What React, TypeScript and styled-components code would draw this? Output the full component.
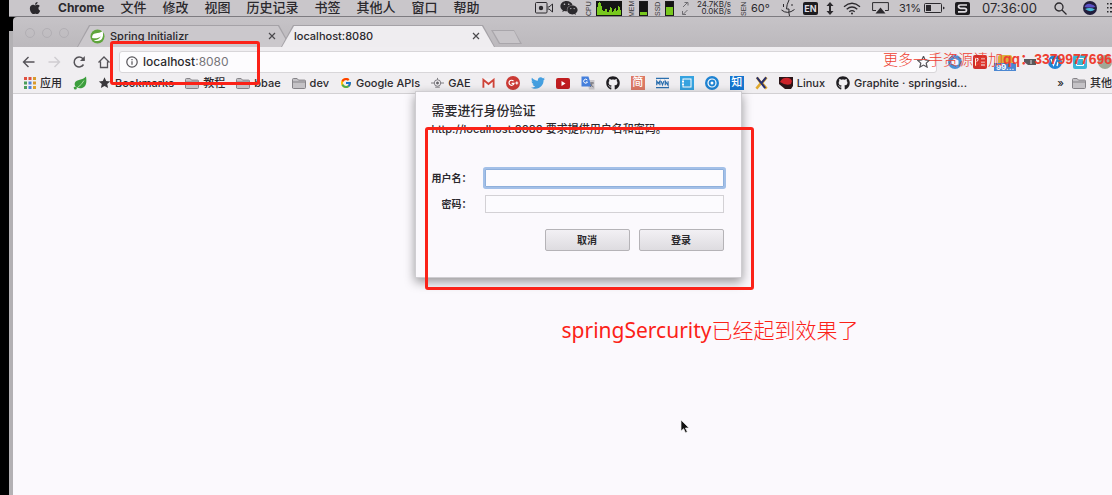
import React from 'react';
import styled, { createGlobalStyle, css } from 'styled-components';
import { FaApple, FaWeixin, FaTwitter, FaGithub } from 'react-icons/fa';
import { FcGoogle } from 'react-icons/fc';

const ui = '"Inter", "Noto Sans CJK SC", sans-serif';
const ink = '#2b292d';
const red = '#fb2218';

const Global = createGlobalStyle`
  * { box-sizing: border-box; }
  html, body, #root { margin: 0; min-height: 100vh; }
  body { background: #000; font-family: ${ui}; color: ${ink}; overflow: hidden; }
  button { font: inherit; color: inherit; background: none; border: 0; padding: 0; cursor: default; }
  a { color: inherit; text-decoration: none; }
  svg { display: block; flex: none; }
`;

const Desktop = styled.div`
  position: relative;
  min-height: 100vh;
  padding-left: 9px;
  display: flex;
  flex-direction: column;
  overflow: hidden;
`;

const MenuBar = styled.header`
  display: flex;
  align-items: center;
  height: 17px;
  padding-left: 19px;
  background: #c9c6ca;
  border-bottom: 1px solid #7d7b80;
  overflow: hidden;
`;

const Menus = styled.nav`
  display: flex;
  align-items: center;
  gap: 16px;
  padding-bottom: 1px;
  font-size: 13px;
  line-height: 15px;
  font-weight: 500;
`;

const MenuButton = styled.button<{ $app?: boolean }>`
  white-space: nowrap;
  ${(p) => p.$app && css`font-size: 12px; font-weight: 700;`}
`;

const Status = styled.div`
  display: flex;
  align-items: center;
  margin-left: auto;
  flex: none;
  font-size: 11px;
  line-height: 16px;
  white-space: nowrap;
`;

const StatusItem = styled.div<{ $w: number; $gap?: number; $large?: boolean }>`
  display: flex;
  align-items: center;
  gap: 3px;
  flex: none;
  width: ${(p) => p.$w}px;
  margin-left: ${(p) => p.$gap ?? 8}px;
  ${(p) => p.$large && css`font-size: 13px;`}
`;

const VerticalLabel = styled.span`
  display: flex;
  align-items: center;
  justify-content: center;
  writing-mode: vertical-rl;
  rotate: 180deg;
  font: 400 7px/8px "Liberation Sans", sans-serif;
  width: 8px;
  height: 15px;
  color: #3a383c;
`;

const Meter = styled.span<{ $level: number }>`
  width: 9px;
  height: 15px;
  border: 1px solid #1b1b1b;
  background: linear-gradient(to top, #78c81e ${(p) => p.$level}%, #141414 ${(p) => p.$level}%);
`;

const Speeds = styled.span`
  display: flex;
  flex-direction: column;
  font-size: 8px;
  line-height: 7px;
  text-align: right;
`;

const Badge = styled.span`
  width: 15px;
  height: 13px;
  border-radius: 2px;
  background: #1d1c1f;
  color: #dedbe0;
  font-size: 9px;
  line-height: 13px;
  font-weight: 700;
  text-align: center;
`;

const Browser = styled.main`
  flex: 1;
  display: flex;
  flex-direction: column;
  border-left: 4px solid;
  border-image: linear-gradient(#000 14px, #b3b1b4 14px) 0 0 0 4;
`;

const TabStrip = styled.div`
  display: flex;
  align-items: flex-end;
  height: 30px;
  padding-left: 12px;
  background: linear-gradient(#c6c3c7, #bcb9bd);
  border-top-left-radius: 4px;
`;

const Lights = styled.div`
  display: flex;
  gap: 7px;
  width: 52px;
  padding-bottom: 9px;
`;

const Light = styled.button`
  width: 10px;
  height: 10px;
  border: 1px solid #b2afb4;
  border-radius: 50%;
`;

const slant = 'polygon(12px 0, calc(100% - 12px) 0, 100% 100%, 0 100%)';

const Tab = styled.div<{ $active?: boolean }>`
  position: relative;
  display: flex;
  align-items: center;
  gap: 5px;
  width: 214px;
  height: 22px;
  padding: 0 15px 0 13px;
  background: #a5a2a7;
  clip-path: ${slant};
  font-size: 11px;
  font-weight: 500;
  z-index: ${(p) => (p.$active ? 2 : 1)};
  margin-left: ${(p) => (p.$active ? '-10px' : '0')};
  &::before {
    content: '';
    position: absolute;
    inset: 1px 1px 0;
    background: ${(p) => (p.$active ? '#efedf0' : '#cbc8cc')};
    clip-path: ${slant};
  }
  > * { position: relative; }
`;

const TabClose = styled.button`
  margin-left: auto;
`;

const NewTab = styled.button`
  width: 31px;
  height: 14px;
  margin: 0 0 3px -4px;
  background: #a9a6ab;
  clip-path: polygon(0 0, 23px 0, 100% 100%, 8px 100%);
  &::before {
    content: '';
    display: block;
    height: 12px;
    margin: 0 2px;
    background: #c8c5c9;
    clip-path: polygon(0 0, 21px 0, 100% 100%, 7px 100%);
  }
`;

const Toolbar = styled.div`
  position: relative;
  display: flex;
  align-items: center;
  gap: 11px;
  height: 26px;
  padding: 3px 0 0 9px;
  background: #f0eef1;
`;

const NavButtons = styled.div`
  display: flex;
  gap: 11px;
`;

const Omnibox = styled.form`
  flex: 1;
  display: flex;
  align-items: center;
  gap: 5px;
  height: 22px;
  margin-left: -3px;
  padding: 0 6px;
  background: #fdfcfe;
  border: 1px solid #d8d6d9;
  border-radius: 3px;
`;

const Address = styled.div`
  position: relative;
  flex: 1;
  display: flex;
  font-size: 12px;
  line-height: 18px;
  font-weight: 500;
`;

const AddressInput = styled.input`
  position: absolute;
  inset: 0;
  width: 100%;
  border: 0;
  background: transparent;
  outline: 0;
  font: inherit;
`;

const Port = styled.span`
  color: #77757a;
  font-weight: 400;
`;

const Extensions = styled.div`
  display: flex;
  gap: 11px;
`;

const Extension = styled.button<{ $color: string; $round?: boolean }>`
  position: relative;
  width: 14px;
  height: 14px;
  color: #fff;
  background: ${(p) => p.$color};
  border-radius: ${(p) => (p.$round ? '50%' : '2px')};
`;

const Count = styled.span`
  position: absolute;
  left: -4px;
  top: 8px;
  width: 22px;
  height: 8px;
  background: #4b87d2;
  font-size: 8px;
  line-height: 8px;
  font-weight: 700;
`;

const Watermark = styled.div`
  position: absolute;
  right: 0;
  top: 1px;
  z-index: 3;
  display: flex;
  white-space: nowrap;
  font: 300 15px/22px "Noto Sans CJK SC", sans-serif;
  color: #ee3f31;
  pointer-events: none;
`;

const WatermarkId = styled.span`
  font: 700 14px/22px "Liberation Sans", "Noto Sans CJK SC", sans-serif;
`;

const Bookmarks = styled.nav`
  display: flex;
  align-items: center;
  gap: 11px;
  height: 21px;
  padding-left: 11px;
  background: #f0eef1;
  border-bottom: 1px solid #d2d0d3;
  font-size: 11px;
  line-height: 16px;
  font-weight: 500;
  overflow: hidden;
`;

const Bookmark = styled.a`
  display: flex;
  align-items: center;
  gap: 4px;
  flex: none;
  white-space: nowrap;
`;

const Other = styled.div`
  display: flex;
  align-items: center;
  gap: 8px;
  flex: none;
  margin-left: auto;
`;

const Tile = styled.span<{ $color: string }>`
  width: 14px;
  height: 14px;
  background: ${(p) => p.$color};
  color: #fff;
  font-size: 11px;
  line-height: 13px;
  text-align: center;
`;

const Page = styled.section`
  flex: 1;
  display: flex;
  flex-direction: column;
  align-items: center;
  padding-left: 31px;
  background: #fbf9fd;
`;

const Dialog = styled.form`
  position: relative;
  z-index: 2;
  width: 327px;
  margin-top: -3px;
  padding: 8px 17px 26px 16px;
  background: #fbf9fd;
  border: 1px solid #cfcdd1;
  box-shadow: 0 4px 10px rgba(0, 0, 0, 0.4);
`;

const DialogTitle = styled.h1`
  margin: 0;
  font-size: 13px;
  line-height: 20px;
  font-weight: 500;
`;

const DialogText = styled.p`
  margin: 0 0 27px;
  font-size: 11px;
  line-height: 18px;
  font-weight: 500;
  white-space: nowrap;
`;

const Field = styled.div`
  display: flex;
  align-items: center;
  justify-content: space-between;
  height: 26px;
`;

const Label = styled.label`
  width: 40px;
  text-align: right;
  font-size: 10px;
  line-height: 16px;
  font-weight: 700;
  white-space: nowrap;
`;

const Input = styled.input<{ $focused?: boolean }>`
  width: 239px;
  height: 18px;
  border: 1px solid #d3d1d5;
  background: #fcfbfe;
  outline: 0;
  ${(p) => p.$focused && css`
    border-color: #8fb0dc;
    border-radius: 1px;
    box-shadow: 0 0 0 2px #a3c0e8;
  `}
`;

const Actions = styled.div`
  display: flex;
  justify-content: flex-end;
  gap: 9px;
  margin-top: 12px;
`;

const ActionButton = styled.button`
  && {
    width: 85px;
    height: 22px;
    border: 1px solid #b5b3b7;
    border-radius: 2px;
    background: linear-gradient(#f2f0f4, #dedce0);
    font-size: 10px;
    line-height: 20px;
    font-weight: 700;
  }
`;

const Highlight = styled.div<{ $x: number; $y: number; $w: number; $h: number }>`
  position: absolute;
  z-index: 5;
  left: ${(p) => p.$x}px;
  top: ${(p) => p.$y}px;
  width: ${(p) => p.$w}px;
  height: ${(p) => p.$h}px;
  border: 3px solid ${red};
  border-radius: 3px;
  pointer-events: none;
`;

const Note = styled.p`
  margin: 36px 0 0 264px;
  font: 400 21px/30px "Noto Sans", "Noto Sans CJK SC", sans-serif;
  color: ${red};
  white-space: nowrap;
`;

const NoteCjk = styled.span`
  font-family: "Noto Sans CJK SC", sans-serif;
  font-weight: 300;
`;

const Pointer = styled.div`
  position: absolute;
  left: 680px;
  top: 419px;
`;

const Folder = () => (
  <svg width="14" height="11" viewBox="0 0 14 11">
    <path d="M.5 10V1.5Q.5.5 1.5.5h3.6l1.4 1.6h6q1 0 1 1V9.500q0 1-1 1h-11q-1 0-1-1z" fill="#c4c2c6" stroke="#858388" />
    <path d="M1 4h12" stroke="#858388" />
  </svg>
);

const Close = () => (
  <svg width="8" height="8" viewBox="0 0 8 8" stroke="#4b494d" strokeWidth="1.200">
    <path d="M1 1l6 6M7 1L1 7" />
  </svg>
);

const SpringLeaf = () => (
  <svg width="15" height="15" viewBox="0 0 15 15">
    <circle cx="7.5" cy="7.5" r="7" fill="#5fa53c" />
    <path d="M2.200 9C1.800 5.800 4 4.200 7.500 4c2.500-.1 4-.8 5-2.200 1 3.500.8 7.200-1.800 9.200-2.300 1.600-5.200 1-7 .4 3.300-.2 5.800-1.400 7.300-4.200C8.800 9 6 9.600 2.200 9z" fill="#fff" />
  </svg>
);

const GreenLeaf = () => (
  <svg width="14" height="14" viewBox="0 0 14 14">
    <path d="M13 .5C13.800 5 13.500 9 11 11c-2 1.600-5 1.500-7 .6C2 10.500 1 8.500 2 6.500 3.500 3.200 9.500 4.500 13 .5z" fill="#3c9e3d" />
    <path d="M.5 11.500q2 1.500 4 0Q8.500 9 11 4.500" fill="none" stroke="#a7dc9f" />
    <circle cx="2.300" cy="12" r="1.500" fill="#3c9e3d" />
  </svg>
);

const StarShape = ({ filled }: { filled?: boolean }) => (
  <svg width="13" height="12" viewBox="0 0 12 12">
    <path d="M6 .3l1.700 3.700 4 .4-3 2.700.9 4L6 9.100l-3.600 2 .9-4-3-2.700 4-.4z" fill={filled ? '#3a383c' : 'none'} stroke={filled ? 'none' : '#555358'} strokeWidth="1.200" />
  </svg>
);

const appColors = ['#e0503f', '#e0503f', '#d99a2c', '#4a9d5a', '#4d80d8', '#d99a2c', '#4a9d5a', '#4d80d8', '#e0a42c'];
const Apps = () => (
  <svg width="12" height="12" viewBox="0 0 12 12">
    {appColors.map((c, i) => (
      <rect key={i} x={(i % 3) * 4.5} y={Math.floor(i / 3) * 4.5} width="3" height="3" fill={c} />
    ))}
  </svg>
);

const graph = [8, 12, 13, 12, 9, 5, 4, 4, 6, 6, 3, 3, 5, 8, 7, 3, 4, 6, 7, 4, 5, 9, 8, 5];

export default function App() {
  return (
    <Desktop>
      <Global />
      <MenuBar>
        <Menus aria-label="菜单">
          <FaApple size={14} />
          <MenuButton $app>Chrome</MenuButton>
          {['文件', '修改', '视图', '历史记录', '书签', '其他人', '窗口', '帮助'].map((m) => (
            <MenuButton key={m}>{m}</MenuButton>
          ))}
        </Menus>
        <Status>
          <StatusItem $w={18}>
            <svg width="18" height="12" viewBox="0 0 18 12" fill="none" stroke={ink}>
              <rect x=".5" y=".5" width="11.500" height="10.500" rx="1" />
              <circle cx="6" cy="6" r="2.200" fill={ink} stroke="none" />
              <path d="M12.500 5l1.500 0 3.500-3v8L14 7h-1.500" />
            </svg>
          </StatusItem>
          <StatusItem $w={18} $gap={7}><FaWeixin size={18} color={ink} /></StatusItem>
          <StatusItem $w={37} $gap={7}>
            <VerticalLabel>CPU</VerticalLabel>
            <svg width="26" height="15" viewBox="0 0 26 15">
              <rect width="26" height="15" fill="#141414" />
              {graph.map((h, i) => (
                <rect key={i} x={i + 1} y={14 - h} width="1" height={h} fill="#78c81e" />
              ))}
            </svg>
          </StatusItem>
          <StatusItem $w={20} $gap={6}><VerticalLabel>MEM</VerticalLabel><Meter $level={22} /></StatusItem>
          <StatusItem $w={20} $gap={6}><VerticalLabel>SSD</VerticalLabel><Meter $level={60} /></StatusItem>
          <StatusItem $w={7}>
            <svg width="7" height="13" viewBox="0 0 7 13" fill="none" stroke="#6e6c71">
              <path d="M1 5l4.500-4.500M2.500.5h3.500v3M5.500 8L1 12.500M.5 9v3.500H4" />
            </svg>
          </StatusItem>
          <StatusItem $w={40}><Speeds><span>24.7KB/s</span><span>0.0KB/s</span></Speeds></StatusItem>
          <StatusItem $w={33} $gap={3}><VerticalLabel>SEN</VerticalLabel>60°</StatusItem>
          <StatusItem $w={14}>
            <svg width="14" height="16" viewBox="0 0 14 16" fill="none" stroke={ink}>
              <path d="M2.500 4v3M11 4v2M8 0Q5.500 5 5.500 9h2.500Q7.500 13 8.500 16M.5 10q6 5 13-.5" />
            </svg>
          </StatusItem>
          <StatusItem $w={15}><Badge>EN</Badge></StatusItem>
          <StatusItem $w={8}>
            <svg width="8" height="13" viewBox="0 0 8 13">
              <path d="M4 0l3.500 4h-2.500v5h2.500L4 13 .5 9H3V4H.5z" fill={ink} />
            </svg>
          </StatusItem>
          <StatusItem $w={18} $gap={9}>
            <svg width="18" height="13" viewBox="0 0 18 13" fill="none" stroke={ink} strokeWidth="1.300">
              <path d="M1 4.800q8-7 16 0M3.700 7.300q5.300-4.600 10.600 0M6.300 9.800q2.700-2.300 5.400 0" />
              <circle cx="9" cy="11.500" r="1" fill={ink} stroke="none" />
            </svg>
          </StatusItem>
          <StatusItem $w={17} $gap={11}>
            <svg width="17" height="12" viewBox="0 0 17 12">
              <path d="M4 8.500H.6V.6h15.800v7.900H13" fill="none" stroke={ink} />
              <path d="M8.500 5.500l5 6h-10z" fill={ink} />
            </svg>
          </StatusItem>
          <StatusItem $w={45} $gap={10}>
            31%
            <svg width="21" height="10" viewBox="0 0 21 10">
              <rect x=".5" y=".5" width="17" height="9" rx="1" fill="none" stroke={ink} />
              <path d="M2 2h5v6H2z" fill={ink} />
              <path d="M19 3.500l2 1.500-2 1.500z" fill={ink} />
            </svg>
          </StatusItem>
          <StatusItem $w={15} $gap={11}>
            <svg width="15" height="13" viewBox="0 0 15 13">
              <rect width="15" height="13" rx="2" fill="#1d1c1f" />
              <path d="M12 3H5.500Q3.500 3 3.500 4.600t2 1.700h4q2 0 2 1.700t-2 1.800H3" fill="none" stroke="#dedbe0" strokeWidth="1.700" />
            </svg>
          </StatusItem>
          <StatusItem $w={56} $gap={12} $large>07:36:00</StatusItem>
          <StatusItem $w={13} $gap={16}>
            <svg width="13" height="13" viewBox="0 0 13 13" fill="none" stroke={ink} strokeWidth="1.300">
              <circle cx="5" cy="5" r="4" /><path d="M8 8l4.500 4.500" />
            </svg>
          </StatusItem>
          <StatusItem $w={14} $gap={16}>
            <svg width="14" height="14" viewBox="0 0 14 14">
              <circle cx="7" cy="7" r="7" fill="#211d3c" />
              <path d="M1.500 6q2-4 6-3t5 3q-5 1-11 0z" fill="#5b4fc4" />
              <path d="M2 8q5-2 10 .5-5 3.500-10-.5z" fill="#4bb8d8" />
            </svg>
          </StatusItem>
          <StatusItem $w={5} $gap={10}>
            <svg width="5" height="10" viewBox="0 0 5 10" fill={ink}>
              {[0, 4, 8].map((y) => <path key={y} d={`M0 ${y}h1.500v1.500H0zM3 ${y}h2v1.500H3z`} />)}
            </svg>
          </StatusItem>
        </Status>
      </MenuBar>

      <Browser>
        <TabStrip>
          <Lights>
            <Light aria-label="关闭" /><Light aria-label="最小化" /><Light aria-label="缩放" />
          </Lights>
          <Tab>
            <SpringLeaf />
            <span>Spring Initializr</span>
            <TabClose aria-label="关闭标签页"><Close /></TabClose>
          </Tab>
          <Tab $active>
            <span>localhost:8080</span>
            <TabClose aria-label="关闭标签页"><Close /></TabClose>
          </Tab>
          <NewTab aria-label="新标签页" />
        </TabStrip>

        <Toolbar>
          <NavButtons>
            <button aria-label="后退">
              <svg width="14" height="14" viewBox="0 0 14 14" fill="none" stroke="#555358" strokeWidth="1.400"><path d="M12.500 7H2M6.500 2L1.500 7l5 5" /></svg>
            </button>
            <button aria-label="前进">
              <svg width="14" height="14" viewBox="0 0 14 14" fill="none" stroke="#cfcdd1" strokeWidth="1.400"><path d="M1.500 7H12M7.500 2l5 5-5 5" /></svg>
            </button>
            <button aria-label="重新加载">
              <svg width="14" height="14" viewBox="0 0 14 14" fill="none" stroke="#555358" strokeWidth="1.500"><path d="M11.500 9.500A5 5 0 1 1 10.800 3.500L12 5" /><path d="M12.800 1v5H8z" fill="#555358" stroke="none" /></svg>
            </button>
            <button aria-label="主页">
              <svg width="14" height="14" viewBox="0 0 14 14" fill="none" stroke="#555358" strokeWidth="1.300"><path d="M1.500 7.500L7 2l5.500 5.500M3.500 6.500v6h7v-6" /></svg>
            </button>
          </NavButtons>
          <Omnibox>
            <svg width="12" height="12" viewBox="0 0 12 12" fill="none" stroke="#555358" strokeWidth="1.200">
              <circle cx="6" cy="6" r="5.200" /><path d="M6 5.200v3.600M6 3v1.200" />
            </svg>
            <Address>
              <span>localhost</span><Port>:8080</Port>
              <AddressInput aria-label="地址" />
            </Address>
            <StarShape />
          </Omnibox>
          <Extensions>
            <Extension $color="#4a90d6" $round aria-label="扩展 1">
              <svg width="14" height="14" viewBox="0 0 14 14"><path d="M7 3.500l3.500 2v4L7 10.500l-3.500-2v-3z" fill="#f4f6fb" /></svg>
            </Extension>
            <Extension $color="#cf2f2b" aria-label="扩展 2">
              <svg width="14" height="14" viewBox="0 0 14 14" fill="none" stroke="#fff"><path d="M2.500 11V3.500h2.500q1 2-2 3.500M8 4h4M8 7h4M8 10h4" /></svg>
            </Extension>
            <Extension $color="#d9b13c" aria-label="扩展 3"><Count>99...</Count></Extension>
            <Extension $color="transparent" aria-label="扩展 4">
              <svg width="14" height="14" viewBox="0 0 14 14"><path d="M1 4h12v6H5L1 7z" fill="#5a585c" /><path d="M8 5v4" stroke="#ddd" /></svg>
            </Extension>
            <Extension $color="#1f84d6" $round aria-label="扩展 5">
              <svg width="14" height="14" viewBox="0 0 14 14" fill="none" stroke="#fff" strokeWidth="1.300"><path d="M3 4l2.500 6L8 4M9 11l1-4M10.500 5v-.5" /></svg>
            </Extension>
            <Extension $color="#38b6d8" aria-label="扩展 6">
              <svg width="14" height="14" viewBox="0 0 14 14" fill="none" stroke="#fff"><path d="M3.500 3.500h7v7h-7z" /></svg>
            </Extension>
            <Extension $color="#a0a896" $round aria-label="扩展 7" />
          </Extensions>
          <Watermark>更多一手资源请加<WatermarkId>qq：3379977696</WatermarkId></Watermark>
        </Toolbar>

        <Bookmarks aria-label="书签栏">
          <Bookmark href="#"><Apps />应用</Bookmark>
          <Bookmark href="#" aria-label="Spring"><GreenLeaf /></Bookmark>
          <Bookmark href="#"><StarShape filled />Bookmarks</Bookmark>
          <Bookmark href="#"><Folder />教程</Bookmark>
          <Bookmark href="#"><Folder />bbae</Bookmark>
          <Bookmark href="#"><Folder />dev</Bookmark>
          <Bookmark href="#"><FcGoogle size={12} />Google APIs</Bookmark>
          <Bookmark href="#">
            <svg width="13" height="12" viewBox="0 0 14 12" fill="none" stroke="#77757a">
              <circle cx="7" cy="6" r="3.500" /><circle cx="7" cy="6" r="1.200" fill="#555358" /><path d="M0 6h3.500M10.500 6H14M7 .5v2M4.500 10.500h5" />
            </svg>
            GAE
          </Bookmark>
          <Bookmark href="#" aria-label="Gmail">
            <svg width="13" height="11" viewBox="0 0 14 11"><rect x="1" width="12" height="10" fill="#f7f3f5" /><path d="M1.500 10V1.500L7 6l5.500-4.500V10" fill="none" stroke="#cf4439" strokeWidth="2" /></svg>
          </Bookmark>
          <Bookmark href="#" aria-label="Google Plus">
            <svg width="14" height="14" viewBox="0 0 14 14"><circle cx="7" cy="7" r="7" fill="#cb3a35" /><path d="M7.500 5.200A2.500 2.500 0 1 0 8 7.300H5.600M9.300 7h3M10.800 5.500v3" fill="none" stroke="#fff" strokeWidth="1.200" /></svg>
          </Bookmark>
          <Bookmark href="#" aria-label="Twitter"><FaTwitter size={14} color="#459fe0" /></Bookmark>
          <Bookmark href="#" aria-label="YouTube">
            <svg width="14" height="11" viewBox="0 0 14 11"><rect width="14" height="11" rx="2" fill="#c01d20" /><path d="M5.500 3l4 2.500-4 2.500z" fill="#fff" /></svg>
          </Bookmark>
          <Bookmark href="#" aria-label="翻译">
            <svg width="14" height="14" viewBox="0 0 14 14"><path d="M6 4h7.500v9.500H8z" fill="#c9c7cc" /><path d="M.5.5h7l3 10H.5z" fill="#4680dd" /><path d="M6.300 4A2 2 0 1 0 6.500 6H5" fill="none" stroke="#fff" /><path d="M9 7h4M11 6v1q0 3-2 4M9.500 8q1 2 3 3" fill="none" stroke="#77757a" /></svg>
          </Bookmark>
          <Bookmark href="#" aria-label="GitHub"><FaGithub size={14} color="#1f1d21" /></Bookmark>
          <Bookmark href="#"><Tile $color="#dd7a66">简</Tile></Bookmark>
          <Bookmark href="#" aria-label="MVN">
            <svg width="13" height="12" viewBox="0 0 14 12" fill="none" stroke="#2b6fae"><path d="M0 1h14M0 11h14" strokeWidth="1.500" /><path d="M.8 8.500V4l1.700 2.500L4.200 4v4.500M5.500 4L7 8l1.500-4M10 8.500V4l3 4.500V4" strokeWidth="1.300" /></svg>
          </Bookmark>
          <Bookmark href="#" aria-label="ProcessOn">
            <svg width="14" height="14" viewBox="0 0 14 14"><rect width="14" height="14" fill="#36a3e0" /><rect x="3" y="3" width="8" height="8" fill="none" stroke="#fff" /><path d="M2 5.500h2M2 8.500h2" stroke="#fff" /></svg>
          </Bookmark>
          <Bookmark href="#" aria-label="云">
            <svg width="14" height="14" viewBox="0 0 14 14"><circle cx="7" cy="7" r="7" fill="#1f83d2" /><circle cx="7" cy="7" r="4" fill="none" stroke="#fff" strokeWidth="1.200" /><circle cx="7" cy="7" r="1.500" fill="#fff" /></svg>
          </Bookmark>
          <Bookmark href="#"><Tile $color="#1676d0">知</Tile></Bookmark>
          <Bookmark href="#" aria-label="X">
            <svg width="13" height="14" viewBox="0 0 14 14" strokeWidth="2.800" fill="none"><path d="M12.500 1L7.500 7 12.500 13" stroke="#e0a92f" /><path d="M2 1l4.500 6L1.500 13" stroke="#e0a92f" /><path d="M2 1l9 11.500M12 1L7 7" stroke="#28306e" strokeWidth="2.200" /></svg>
          </Bookmark>
          <Bookmark href="#">
            <svg width="14" height="12" viewBox="0 0 14 12"><path d="M0 0h14v9l-2 3H6L0 7z" fill="#2a1518" /><path d="M1 5q2-4 5-4 5-1 7 3l-1 3q-5 2-11-2z" fill="#cb2229" /></svg>
            Linux
          </Bookmark>
          <Bookmark href="#"><FaGithub size={14} color="#1f1d21" />Graphite · springsid...</Bookmark>
          <Other>
            <span>»</span>
            <Bookmark href="#"><Folder />其他</Bookmark>
          </Other>
        </Bookmarks>

        <Page>
          <Dialog>
            <DialogTitle>需要进行身份验证</DialogTitle>
            <DialogText>http://localhost:8080 要求提供用户名和密码。</DialogText>
            <Field><Label htmlFor="user">用户名：</Label><Input id="user" $focused /></Field>
            <Field><Label htmlFor="pass">密码：</Label><Input id="pass" type="password" /></Field>
            <Actions>
              <ActionButton type="button">取消</ActionButton>
              <ActionButton type="button">登录</ActionButton>
            </Actions>
          </Dialog>
          <Note>springSercurity<NoteCjk>已经起到效果了</NoteCjk></Note>
        </Page>
      </Browser>

      <Highlight $x={110} $y={41} $w={150} $h={44} />
      <Highlight $x={425} $y={127} $w={329} $h={163} />
      <Pointer>
        <svg width="10" height="15" viewBox="0 0 10 15">
          <path d="M1 1v11l2.600-2.300 1.900 4 1.800-.9-1.900-3.800H9z" fill="#111" stroke="#eee" strokeWidth=".7" />
        </svg>
      </Pointer>
    </Desktop>
  );
}
